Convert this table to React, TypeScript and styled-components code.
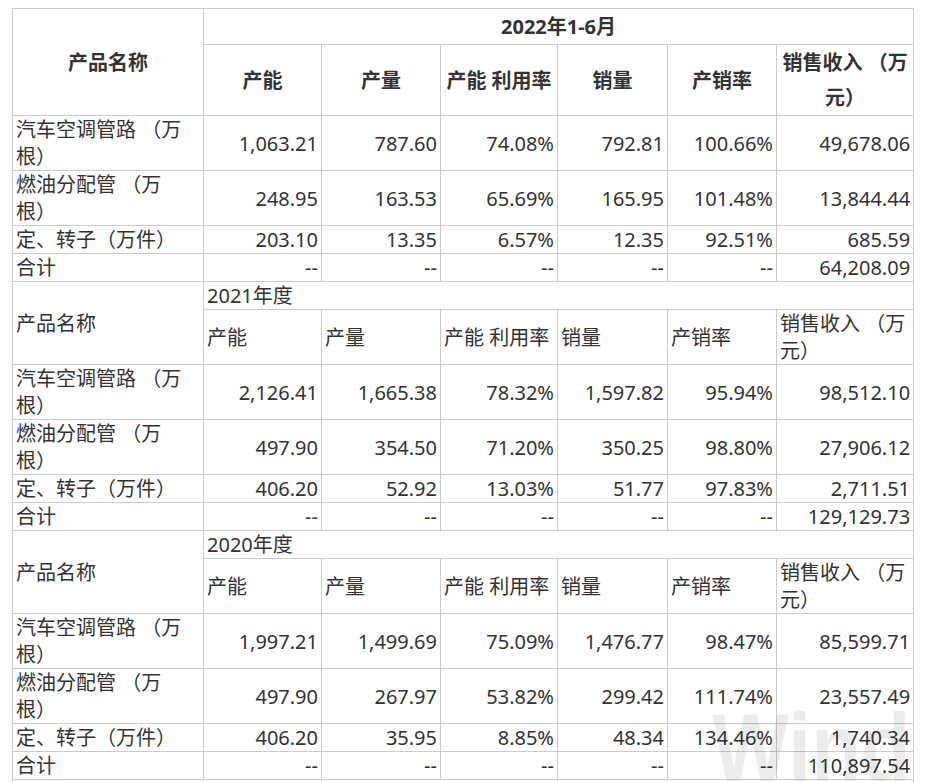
import React from "react";
import styled, { createGlobalStyle } from "styled-components";

type Row = [string, string, string, string, string, string, string];

interface Section {
  period: string;
  strong: boolean;
  rows: Row[];
}

const COLUMNS = ["产能", "产量", "产能 利用率", "销量", "产销率", "销售收入 （万元）"];
const WIDTHS = [191, 118, 119, 117, 110, 109, 137];
const DASH = "--";

const SECTIONS: Section[] = [
  {
    period: "2022年1-6月",
    strong: true,
    rows: [
      ["汽车空调管路 （万根）", "1,063.21", "787.60", "74.08%", "792.81", "100.66%", "49,678.06"],
      ["燃油分配管 （万根）", "248.95", "163.53", "65.69%", "165.95", "101.48%", "13,844.44"],
      ["定、转子（万件）", "203.10", "13.35", "6.57%", "12.35", "92.51%", "685.59"],
      ["合计", DASH, DASH, DASH, DASH, DASH, "64,208.09"],
    ],
  },
  {
    period: "2021年度",
    strong: false,
    rows: [
      ["汽车空调管路 （万根）", "2,126.41", "1,665.38", "78.32%", "1,597.82", "95.94%", "98,512.10"],
      ["燃油分配管 （万根）", "497.90", "354.50", "71.20%", "350.25", "98.80%", "27,906.12"],
      ["定、转子（万件）", "406.20", "52.92", "13.03%", "51.77", "97.83%", "2,711.51"],
      ["合计", DASH, DASH, DASH, DASH, DASH, "129,129.73"],
    ],
  },
  {
    period: "2020年度",
    strong: false,
    rows: [
      ["汽车空调管路 （万根）", "1,997.21", "1,499.69", "75.09%", "1,476.77", "98.47%", "85,599.71"],
      ["燃油分配管 （万根）", "497.90", "267.97", "53.82%", "299.42", "111.74%", "23,557.49"],
      ["定、转子（万件）", "406.20", "35.95", "8.85%", "48.34", "134.46%", "1,740.34"],
      ["合计", DASH, DASH, DASH, DASH, DASH, "110,897.54"],
    ],
  },
];

const App = () => {
  return (
    <>
      <GlobalStyle />
      <Page>
        <Table>
          <colgroup>
            {WIDTHS.map((w, i) => (
              <col key={i} style={{ width: w }} />
            ))}
          </colgroup>
          <tbody>
            {SECTIONS.map((section) => (
              <React.Fragment key={section.period}>
                <tr>
                  <HeadCell rowSpan={2} $strong={section.strong}>
                    产品名称
                  </HeadCell>
                  <HeadCell colSpan={6} $strong={section.strong}>
                    {section.period}
                  </HeadCell>
                </tr>
                <tr>
                  {COLUMNS.map((c) => (
                    <HeadCell key={c} $strong={section.strong}>
                      {c}
                    </HeadCell>
                  ))}
                </tr>
                {section.rows.map((row) => (
                  <tr key={row[0]}>
                    {row.map((value, i) => (
                      <Cell key={i} $num={i > 0}>
                        {value}
                      </Cell>
                    ))}
                  </tr>
                ))}
              </React.Fragment>
            ))}
            <tr>
              <Cell colSpan={7}>&nbsp;</Cell>
            </tr>
          </tbody>
        </Table>
        <Watermark>Wind</Watermark>
      </Page>
    </>
  );
};

const GlobalStyle = createGlobalStyle`
  html, body {
    margin: 0;
    padding: 0;
    background: #fff;
    overflow: hidden;
  }
  body {
    font-family: "Noto Sans", "Noto Sans CJK SC", sans-serif;
    color: #333;
    text-spacing-trim: space-all;
  }
`;

const Page = styled.div`
  position: relative;
  padding: 8px 12px 0;
  height: 782px;
  box-sizing: border-box;
  overflow: hidden;
`;

const Table = styled.table`
  border-collapse: collapse;
  table-layout: fixed;
  width: 902px;
  font-size: 20px;
`;

const Cell = styled.td<{ $num?: boolean }>`
  border: 1px solid #cccccc;
  padding: ${(p) => (p.$num ? "0 3px" : "0 12px 0 3px")};
  line-height: 27px;
  vertical-align: middle;
  text-align: ${(p) => (p.$num ? "right" : "left")};
  color: #333;
`;

const HeadCell = styled.td<{ $strong: boolean }>`
  border: 1px solid #cccccc;
  padding: 0 3px;
  vertical-align: middle;
  line-height: ${(p) => (p.$strong ? "35px" : "27px")};
  font-weight: ${(p) => (p.$strong ? 700 : 400)};
  text-align: ${(p) => (p.$strong ? "center" : "left")};
  color: #333;
`;

/* faint "Wind" watermark over the bottom right corner */
const Watermark = styled.div`
  position: absolute;
  left: 712px;
  top: 700px;
  font-family: "Liberation Sans", sans-serif;
  font-weight: 700;
  font-size: 96px;
  line-height: 1;
  color: rgba(0, 0, 0, 0.075);
  transform: scaleX(0.85);
  transform-origin: left top;
  pointer-events: none;
  white-space: nowrap;
`;

export default App;
